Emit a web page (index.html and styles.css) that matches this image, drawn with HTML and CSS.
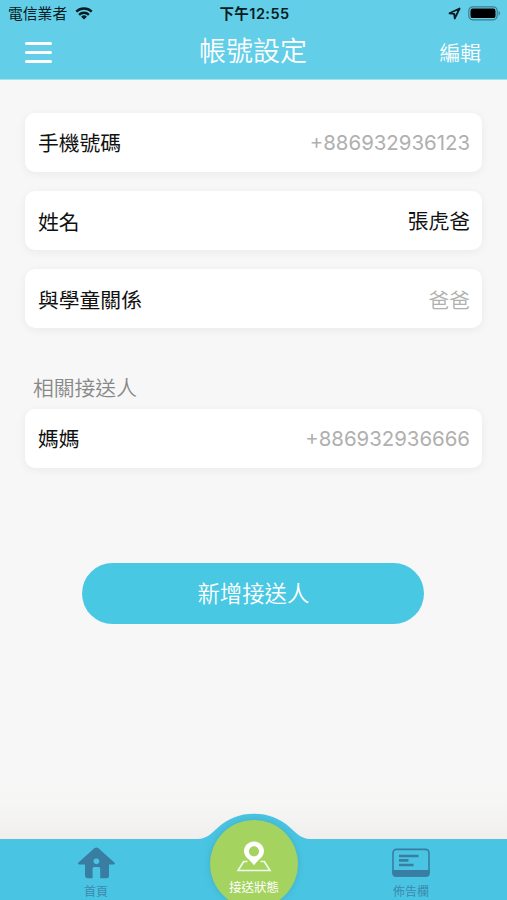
FILE: index.html
```html
<!DOCTYPE html>
<html lang="zh-Hant">
<head>
<meta charset="utf-8">
<meta name="viewport" content="width=device-width, initial-scale=1">
<title>帳號設定</title>
<link rel="stylesheet" href="styles.css">
</head>
<body>
<div class="app">
  <header class="header">
    <div class="status">
      <div class="status-left">
        <span>電信業者</span>
        <svg class="wifi" width="18" height="13" viewBox="0 0 18 13"><g fill="none" stroke="#071c22" stroke-width="2.4"><path d="M1.3 4.7a11 11 0 0 1 15.4 0"/><path d="M4.1 7.8a7 7 0 0 1 9.8 0"/></g><path d="M9 12.6 6.1 9.7a4.1 4.1 0 0 1 5.8 0z" fill="#071c22"/></svg>
      </div>
      <span class="time">下午12:55</span>
      <div class="status-right">
        <svg width="13" height="13" viewBox="0 0 13 13"><path d="M11.6 1.5 1.5 6.300l4.700.6.5 4.600z" fill="none" stroke="#071c22" stroke-width="1.8" stroke-linejoin="round"/></svg>
        <svg width="33" height="15" viewBox="0 0 33 15"><rect x=".8" y=".8" width="28.4" height="13" rx="4" fill="none" stroke="#3d7f8e" stroke-width="1.2"/><rect x="2.5" y="2.5" width="25" height="9.6" rx="2.2" fill="#000"/><path d="M30.600 5v4.600c1.800-.6 1.800-4 0-4.600z" fill="#3d7f8e"/></svg>
      </div>
    </div>
    <div class="nav">
      <div class="menu"><i></i><i></i><i></i></div>
      <h1>帳號設定</h1>
      <span class="edit">編輯</span>
    </div>
  </header>
  <main class="content">
    <div class="card"><span>手機號碼</span><span class="phone">+886932936123</span></div>
    <div class="card"><span>姓名</span><span class="name">張虎爸</span></div>
    <div class="card"><span>與學童關係</span><span class="muted">爸爸</span></div>
    <h2>相關接送人</h2>
    <div class="card"><span>媽媽</span><span class="phone">+886932936666</span></div>
    <button class="add">新增接送人</button>
  </main>
  <footer class="tabs">
    <div class="tab">
      <svg width="38" height="32" viewBox="0 0 38 32"><path fill="#397da2" fill-rule="evenodd" d="M17.6 1.100q1.800-1.400 3.600 0L37.600 15.800q.8 1.600-1 1.600H32v11.300q0 2.500-2.500 2.500h-6.300V21.500q0-1.500-1.500-1.500h-4.600q-1.500 0-1.500 1.500v9.700H10.500Q8 31 8 28.500V17.400H2.200Q.4 17.400 1.200 15.800zM19.400 11.400a2.900 2.900 0 1 0 .01 0z"/></svg>
      <span>首頁</span>
    </div>
    <div class="tab">
      <svg width="38" height="32" viewBox="0 0 38 32"><rect x="1" y="2.4" width="36" height="26.5" rx="3.5" fill="none" stroke="#397da2" stroke-width="1.6"/><path fill="#397da2" d="M.4 23h37.200v3.600q0 3.200-3 3.200H3.400q-3 0-3-3.200z"/><path d="M7 9h19.500M7 13.300h9.500M7 18h14.500" stroke="#397da2" stroke-width="2.7"/></svg>
      <span>佈告欄</span>
    </div>
    <svg class="bump" width="112" height="28" viewBox="0 0 112 28"><path fill="#49c5e3" d="M0 26C8 26 13 21 20 14.500 30 5.300 42 .7 56 .7s26 4.600 36 13.800c7 6.500 12 11.500 20 11.500V28H0z"/></svg>
    <div class="center">
      <svg width="36" height="34" viewBox="0 0 36 34"><path d="M11.500 21.500H7.700L2 30.500h32l-5.700-9h-3.800" fill="none" stroke="#f3faef" stroke-width="1.6"/><path fill="#fff" fill-rule="evenodd" d="M18 1.500c-5.600 0-10 4.300-10 9.700 0 6 6.500 8.800 10 14 3.500-5.200 10-8 10-14 0-5.400-4.400-9.700-10-9.700zm0 4.700a5.100 5.100 0 1 1 0 10.200 5.100 5.100 0 0 1 0-10.200z"/></svg>
      <span>接送狀態</span>
    </div>
  </footer>
</div>
</body>
</html>
```

FILE: styles.css
```css
* { box-sizing: border-box; }
body { margin: 0; font-family: Inter, "Noto Sans CJK TC", sans-serif; }
.app {
  width: 507px;
  height: 900px;
  display: flex;
  flex-direction: column;
  overflow: hidden;
  background: linear-gradient(#f7f7f7 780px, #f6f6f4 805px, #f0efed 838px);
}
.header { height: 80px; background: #63cee8; border-bottom: 1px solid #a5e1ef; flex: none; }
.status {
  height: 27px;
  padding: 0 6px 0 8px;
  display: grid;
  grid-template-columns: 1fr auto 1fr;
  align-items: center;
  font-size: 14.8px;
  line-height: 26px;
  color: #071c22;
}
.status-left, .status-right { display: flex; align-items: center; }
.status-left { gap: 8px; }
.status-left span { padding-top: 1px; }
.wifi { margin-top: -1px; }
.status-right { justify-content: flex-end; gap: 7px; }
.time { font-weight: 600; font-size: 14.5px; letter-spacing: .45px; }
.nav {
  height: 50px;
  padding: 0 26px 0 25px;
  display: grid;
  grid-template-columns: 1fr auto 1fr;
  align-items: center;
  color: #fff;
}
.menu { width: 27px; display: grid; gap: 6px; }
.menu i { height: 3px; border-radius: 2px; background: #fff; }
h1 { margin: 0; font-size: 27px; line-height: 40px; font-weight: 350; }
.edit { justify-self: end; padding-top: 3px; font-size: 20.8px; line-height: 30px; font-weight: 350; }
.content { flex: 1; padding: 33px 24.6px 0 25.4px; display: flex; flex-direction: column; }
.card {
  height: 58.7px;
  margin-bottom: 19.5px;
  padding: 4px 12.4px 0 12.6px;
  display: flex;
  align-items: center;
  justify-content: space-between;
  border-radius: 10px;
  background: #fff;
  box-shadow: 0 2px 10px rgba(0, 0, 0, .055);
  font-size: 20.8px;
  line-height: 30px;
  color: #111;
}
.phone { padding-bottom: 2px; font-size: 20.4px; color: #b0b0b0; }
.name { padding-bottom: 2px; }
.muted { color: #b0b0b0; font-weight: 350; }
h2 { margin: 26.5px 8px 5px 7.6px; font-size: 20.8px; line-height: 30px; font-weight: 350; color: #888; }
.add {
  width: 342px;
  height: 61px;
  margin: 75.7px 0 0 57px;
  padding: 0 0 2px;
  border: 0;
  border-radius: 31px;
  background: #49c8e4;
  color: #fff;
  font: 350 22.4px/32px "Noto Sans CJK TC", sans-serif;
}
.tabs {
  position: relative;
  height: 61px;
  flex: none;
  padding: 0 77px;
  display: flex;
  justify-content: space-between;
  background: #49c5e3;
}
.tab {
  width: 38px;
  padding-top: 8px;
  display: flex;
  flex-direction: column;
  align-items: center;
  font-size: 12px;
  line-height: 16px;
  color: #3d89ad;
}
.tab svg, .center svg { flex: none; }
.tab span { margin-top: 5px; white-space: nowrap; }
.bump { position: absolute; left: 198px; top: -26px; }
.center {
  position: absolute;
  left: 210px;
  top: -19px;
  width: 88px;
  height: 88px;
  padding-top: 20px;
  display: flex;
  flex-direction: column;
  align-items: center;
  border-radius: 50%;
  background: #a5d35f;
  box-shadow: 0 0 7px rgba(50, 120, 140, .3);
  color: #fff;
  font-size: 12.5px;
  line-height: 16px;
}
.center span { margin-top: 6px; }
```
